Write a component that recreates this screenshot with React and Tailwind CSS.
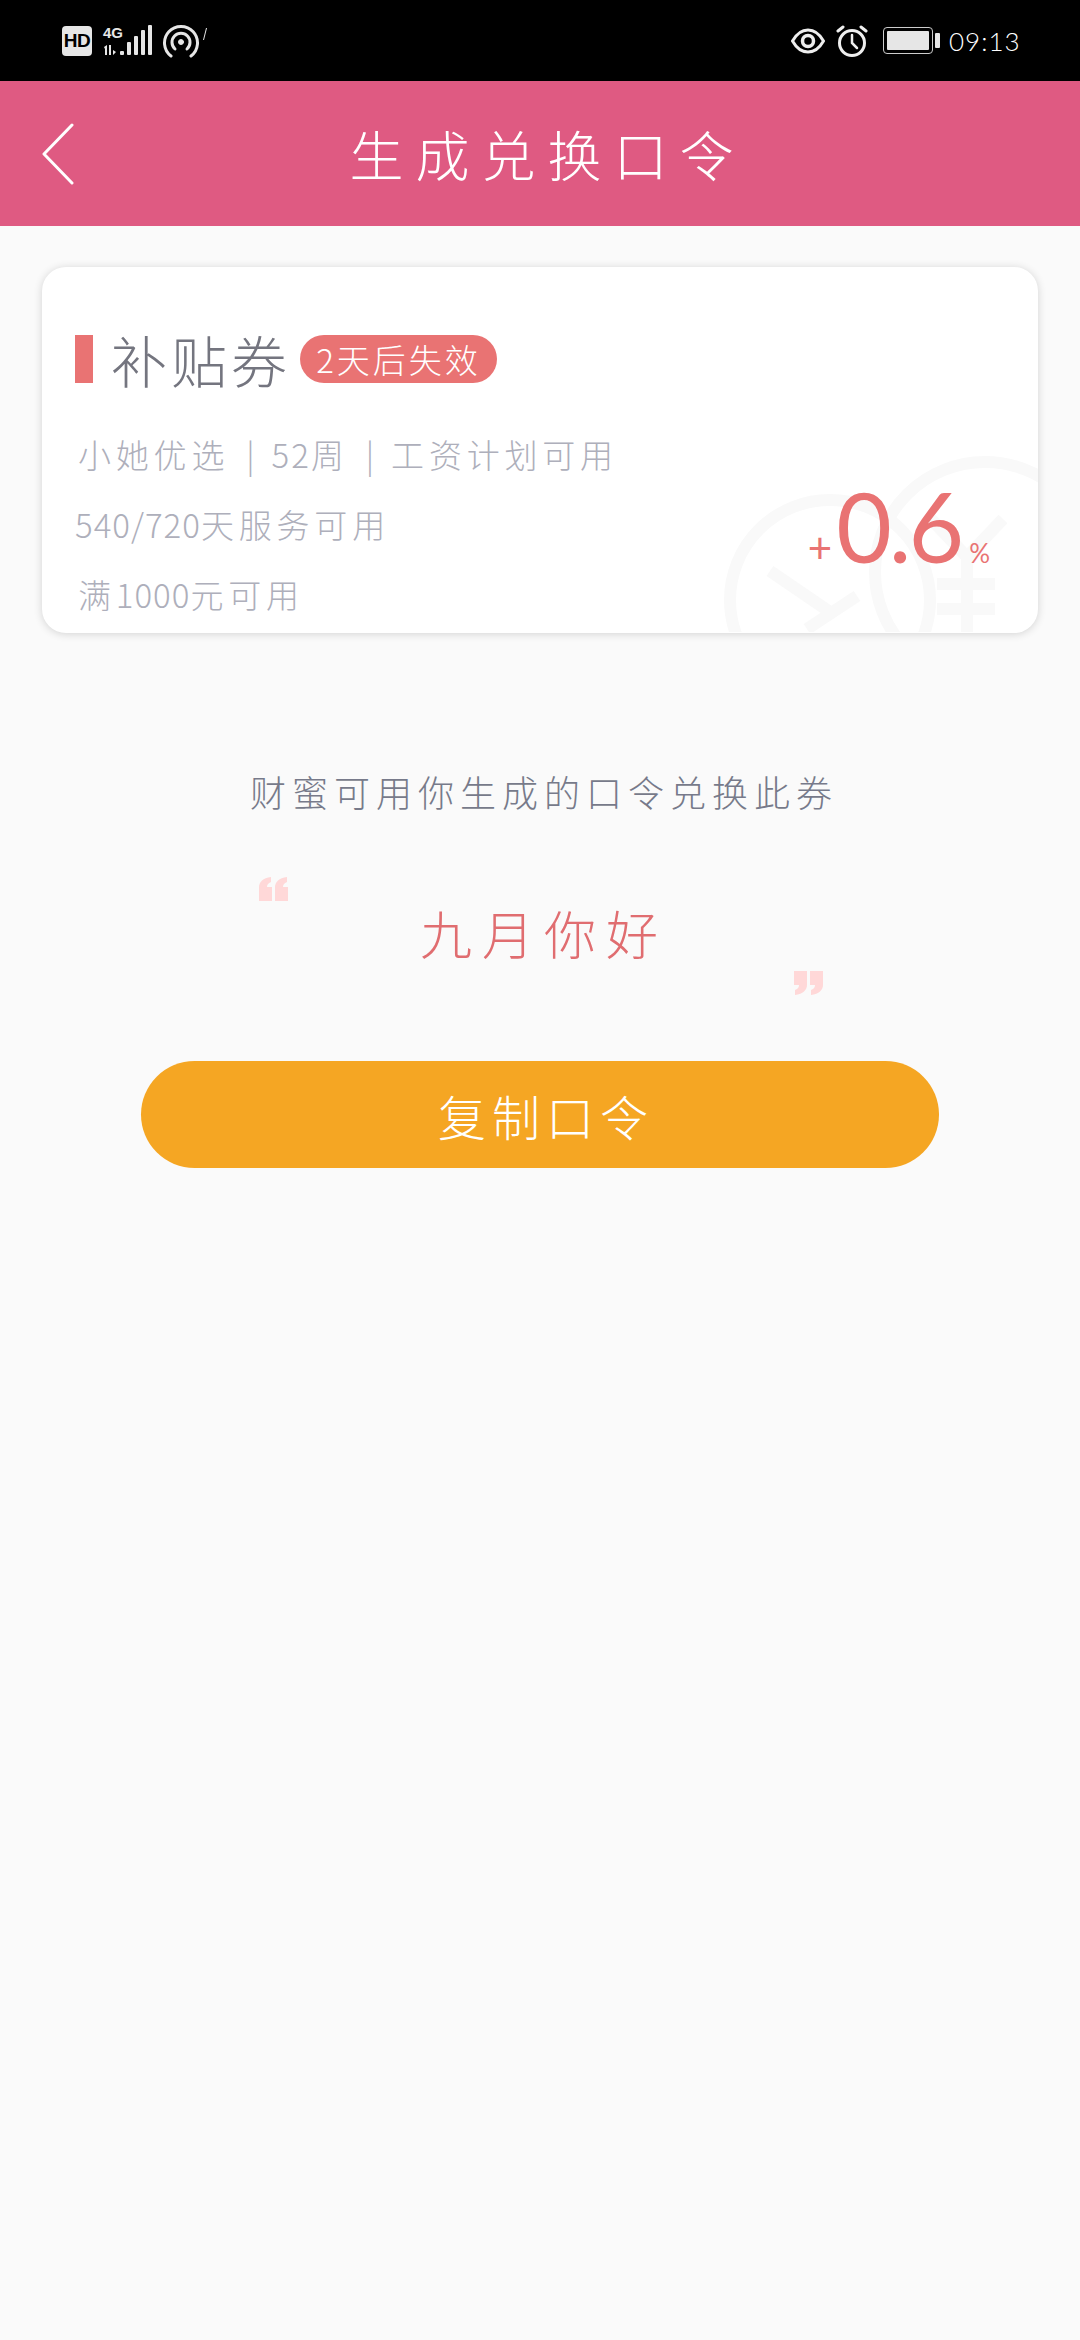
const CJK = { fontFamily: '"Noto Sans CJK SC", "Noto Sans", sans-serif' };

function StatusLeft() {
  return (
    <div className="flex items-center">
      <div className="w-[30px] h-[30px] rounded-[4px] bg-[#e6e6e6] text-black text-[19px] leading-[30px] font-bold text-center tracking-[-0.5px]" style={{ fontFamily: '"Liberation Sans", sans-serif' }}>HD</div>
      <div className="relative ml-[11px] w-[52px] h-[32px]">
        <span className="absolute left-0 top-[1px] text-[15px] leading-[14px] font-bold text-[#e6e6e6] whitespace-nowrap" style={{ fontFamily: '"Liberation Sans", sans-serif' }}>4G</span>
        <svg width="52" height="32" viewBox="0 0 52 32" fill="#e6e6e6">
          <path d="M1 22l3-2v10H2v-6zM6 20h2v10H6zM10 25l3 2-3 3z" />
          <rect x="17" y="26" width="4" height="4" rx="1" />
          <rect x="24" y="17" width="4" height="13" rx="1" />
          <rect x="31" y="11" width="4" height="19" rx="1" />
          <rect x="38" y="5" width="4" height="25" rx="1" />
          <rect x="45" y="0" width="4" height="30" rx="1" />
        </svg>
      </div>
      <svg width="38" height="34" viewBox="0 0 38 34" className="ml-[7px]" fill="none" stroke="#e6e6e6" strokeLinecap="round">
        <path d="M9 32A16.5 16.5 0 1 1 29 32" strokeWidth="3" />
        <path d="M13 25A9 9 0 1 1 25 25" strokeWidth="3" />
        <circle cx="19" cy="18" r="2.5" fill="#e6e6e6" strokeWidth="1" />
      </svg>
      <svg width="4" height="12" viewBox="0 0 4 12" className="ml-[3px] mb-[14px]" stroke="#e6e6e6" strokeWidth="1">
        <path d="M3.5 0L.5 12" />
      </svg>
    </div>
  );
}

function StatusRight() {
  return (
    <div className="flex items-center">
      <svg width="34" height="26" viewBox="0 0 34 26" fill="none" stroke="#eeeeee" strokeWidth="3">
        <path d="M1.5 13C6 5 11 2 17 2s11 3 15.5 11C28 21 23 24 17 24S6 21 1.5 13z" />
        <circle cx="17" cy="13" r="5.5" strokeWidth="3.5" />
      </svg>
      <svg width="32" height="34" viewBox="0 0 32 34" fill="none" stroke="#eeeeee" className="ml-[11px]" strokeLinecap="round">
        <circle cx="16" cy="19" r="12.5" strokeWidth="3" />
        <path d="M16 11v8l5 5" strokeWidth="2.5" />
        <path d="M2 7l5-4M30 7l-5-4" strokeWidth="3" />
      </svg>
      <div className="ml-[15px] w-[50px] h-[27px] border border-[#cccccc] rounded-[4px] p-[3px]">
        <div className="w-full h-full bg-[#e6e6e6] rounded-[1px]"></div>
      </div>
      <div className="ml-[2px] w-[5px] h-[15px] bg-[#e6e6e6] rounded-[1px]"></div>
      <span className="ml-[9px] w-[69px] whitespace-nowrap text-white text-[26px] leading-[30px] font-light tracking-[1px]" style={{ fontFamily: 'Lato, sans-serif' }}>09:13</span>
    </div>
  );
}

function Watermark() {
  return (
    <svg className="absolute left-0 top-0" width="996" height="365" viewBox="0 0 996 365" fill="none" stroke="#f9f9f9" strokeWidth="12">
      <circle cx="788" cy="333" r="100" />
      <path d="M728 304L788 345M815 329L765 362" />
      <circle cx="943" cy="305" r="110" />
      <path d="M961 252L925 290L889 252M895 317H953M895 342H953M925 290V365" />
    </svg>
  );
}

function QuoteMark({ flip }) {
  return (
    <svg width="30" height="24" viewBox="0 0 30 24" fill="#ffd8d8" className={flip ? 'rotate-180' : ''}>
      <path d="M0 24V10C0 5 4 1 12 0V5C9 6 8 8 8 10H13V24zM16 24V10C16 5 20 1 28 0V5C25 6 24 8 24 10H29V24z" />
    </svg>
  );
}

export default function App() {
  return (
    <div className="w-[1080px] h-[2340px] bg-[#fafafa] flex flex-col overflow-hidden" style={CJK}>
      <div className="h-[81px] bg-black flex items-center justify-between pl-[62px] pr-[62px] shrink-0">
        <StatusLeft />
        <StatusRight />
      </div>

      <div className="h-[145px] bg-[#df5a82] flex items-center relative shrink-0">
        <svg width="34" height="62" viewBox="0 0 34 62" fill="none" stroke="#ffffff" strokeWidth="3" strokeLinecap="round" strokeLinejoin="round" className="ml-[41px]">
          <path d="M31 2L3 31l28 29" />
        </svg>
        <div className="absolute inset-0 flex items-center justify-center pl-[15px] text-white text-[54px] font-light tracking-[12px]">生成兑换口令</div>
      </div>

      <div className="relative mt-[41px] mx-[42px] h-[366px] bg-white rounded-[24px] shadow-[0_1px_8px_rgba(0,0,0,0.16)] overflow-hidden shrink-0">
        <Watermark />
        <div className="relative pt-[68px] pl-[33px] pr-[48px]">
          <div className="flex items-center h-[48px]">
            <div className="w-[18px] h-[48px] bg-[#e97373]"></div>
            <span className="ml-[18px] text-[56px] leading-[48px] font-light text-[#74757f] tracking-[4px]">补贴券</span>
            <span className="ml-[9px] w-[197px] h-[48px] rounded-full bg-[#e97373] text-white text-[33px] leading-[48px] font-light text-center tracking-[3px]">2天后失效</span>
          </div>
          <div className="mt-[36px] flex justify-between items-start">
            <div className="text-[33px] leading-[70px] font-light text-[#aeafbb] tracking-[4.8px] whitespace-nowrap">
              <div className="pl-[3px]">小她优选<span className="mx-[17px] tracking-normal">|</span><span className="tracking-[2px]">52</span>周<span className="mx-[17px] tracking-normal">|</span>工资计划可用</div>
              <div><span className="tracking-[1px]">540/720</span>天服务可用</div>
              <div className="pl-[3px]">满<span className="tracking-[1px]">1000</span>元可用</div>
            </div>
            <div className="flex items-baseline text-[#e97373] mt-[62px]" style={{ fontFamily: 'Lato, sans-serif' }}>
              <span className="text-[42px] leading-[90px]">+</span>
              <span className="ml-[4px] text-[96px] leading-[90px] tracking-[-3px]">0.6</span>
              <span className="ml-[8px] text-[26px] leading-[90px]">%</span>
            </div>
          </div>
        </div>
      </div>

      <div className="mt-[133px] pl-[8px] text-center text-[36px] leading-[50px] font-light text-[#777a8a] tracking-[6px]">财蜜可用你生成的口令兑换此券</div>

      <div className="mt-[61px] pl-[259px] h-[24px]"><QuoteMark /></div>
      <div className="mt-[-4px] pl-[8px] text-center text-[52px] leading-[72px] font-light text-[#e06d70] tracking-[10px]">九月你好</div>
      <div className="mt-[2px] pl-[793px] h-[24px]"><QuoteMark flip /></div>

      <button className="mt-[66px] mx-[141px] w-[798px] h-[107px] shrink-0 rounded-full bg-[#f5a623] pl-[12px] text-white text-[48px] font-light tracking-[6px]">复制口令</button>
    </div>
  );
}
